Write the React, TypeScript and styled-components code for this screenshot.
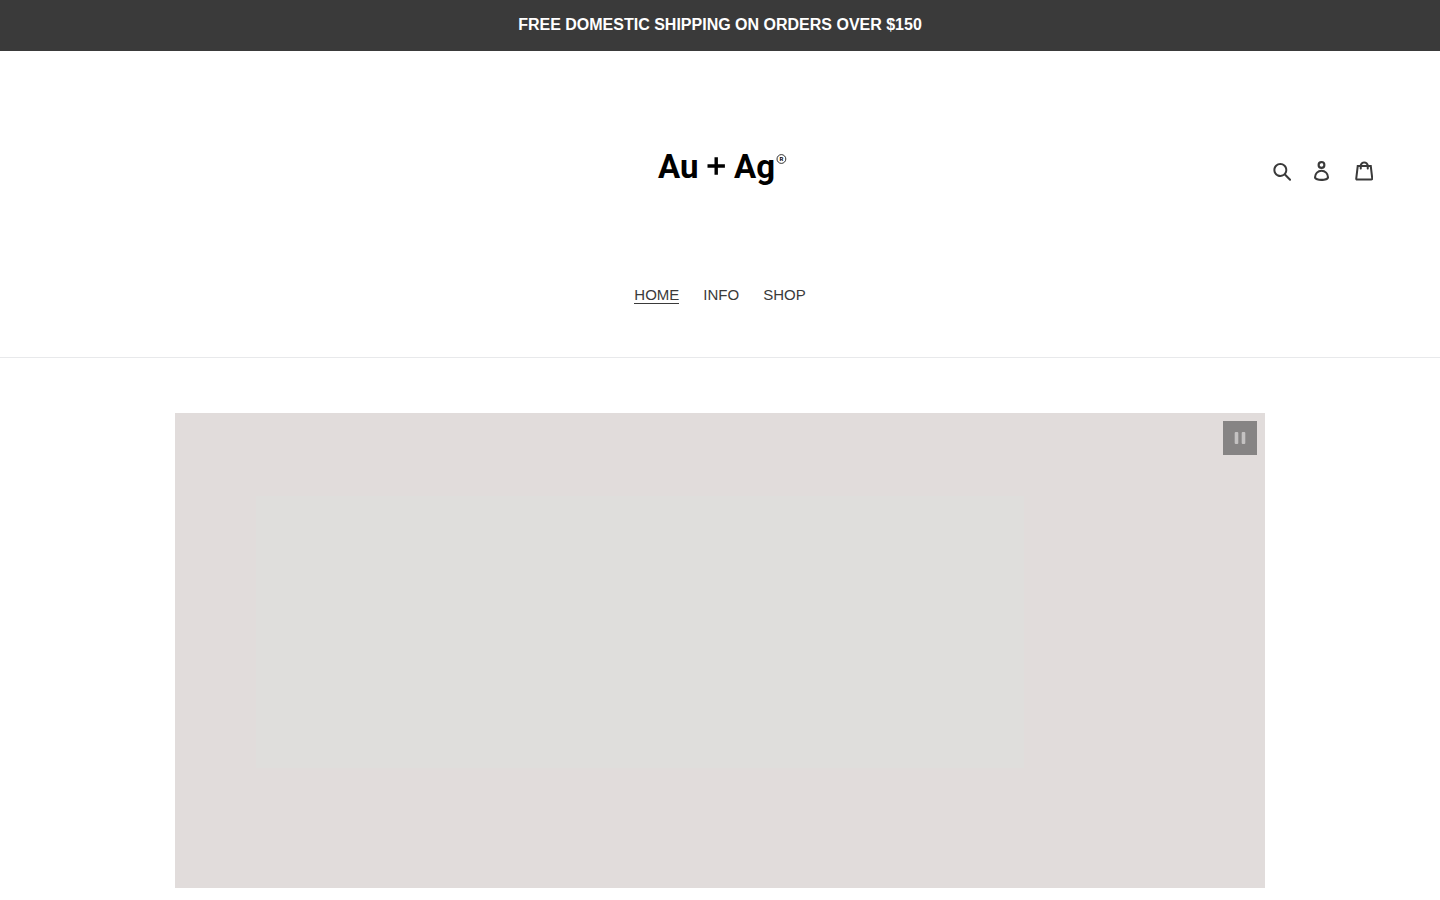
import React from "react";
import styled, { createGlobalStyle, css } from "styled-components";

const GlobalStyle = createGlobalStyle`
  *, *::before, *::after { box-sizing: border-box; }
  body {
    margin: 0;
    background: #fff;
    color: #3a3a3a;
    font-family: "Liberation Sans", Arial, sans-serif;
    font-size: 15px;
    line-height: 22px;
  }
`;

const Announcement = styled.p`
  margin: 0;
  padding: 13px 55px 14px;
  background: #3a3a3a;
  color: #fff;
  text-align: center;
  font-size: 16px;
  font-weight: 700;
  line-height: 24px;
`;

const Header = styled.header`
  border-bottom: 1px solid #e8e9eb;
  padding-bottom: 43px;
`;

const HeaderRow = styled.div`
  display: grid;
  grid-template-columns: 1fr auto 1fr;
  align-items: center;
  padding: 80px 55px 70px;
`;

const LogoLink = styled.a`
  grid-column: 2;
  display: block;
  color: #000;
`;

const LogoArt = styled.svg`
  display: block;
  width: 250px;
  height: 80px;
  fill: currentColor;
  font-family: Roboto, "Liberation Sans", sans-serif;
  font-weight: 700;
`;

const HeaderIcons = styled.div`
  display: flex;
  justify-content: flex-end;
`;

const iconBox = css`
  display: flex;
  align-items: center;
  justify-content: center;
  height: 42px;
  padding: 0;
  border: 0;
  background: none;
  color: #3a3a3a;
  cursor: pointer;
`;

const IconButton = styled.button`
  ${iconBox}
  width: 38px;
`;

const IconLink = styled.a`
  ${iconBox}
  width: 42px;
`;

const Icon = styled.svg`
  display: block;
  height: 20px;
  fill: currentColor;
`;

const NavList = styled.ul`
  display: flex;
  justify-content: center;
  gap: 24px;
  margin: 0;
  padding: 0;
  list-style: none;
`;

const NavItem = styled.li`
  display: flex;
  padding: 5px 0 10px;
`;

const NavLink = styled.a<{ $active?: boolean }>`
  color: #3a3a3a;
  line-height: 17px;
  text-decoration: none;
  border-bottom: 1px solid ${(p) => (p.$active ? "#3a3a3a" : "transparent")};
`;

const Main = styled.main`
  max-width: 1200px;
  margin: 0 auto;
  padding: 55px 55px 12px;
`;

const Slideshow = styled.section`
  position: relative;
  height: 475px;
  padding: 83px 241px 120px 81px;
  background: #e1dcdb;
`;

const SlideImage = styled.div`
  height: 100%;
  background: #dfdedc;
`;

const PauseButton = styled.button`
  position: absolute;
  top: 8px;
  right: 8px;
  display: flex;
  align-items: center;
  justify-content: center;
  width: 34px;
  height: 34px;
  padding: 0;
  border: 0;
  background: #868484;
  color: #c4c2c2;
  cursor: pointer;
`;

const links = [
  { label: "HOME", active: true },
  { label: "INFO" },
  { label: "SHOP" },
];

export default function App() {
  return (
    <>
      <GlobalStyle />
      <Announcement>FREE DOMESTIC SHIPPING ON ORDERS OVER $150</Announcement>
      <Header>
        <HeaderRow>
          <LogoLink href="#" aria-label="Au + Ag">
            <LogoArt viewBox="0 0 250 80">
              <text x="63" y="47" fontSize="33">Au</text>
              <path d="M112.500 33.300h7v-7h3.400v7h7v3.400h-7v7h-3.400v-7h-7z" />
              <text x="139" y="47" fontSize="33">Ag</text>
              <circle cx="186.400" cy="28" r="4.400" fill="none" stroke="currentColor" strokeWidth="0.800" />
              <text x="186.400" y="30" fontSize="6" textAnchor="middle">R</text>
            </LogoArt>
          </LogoLink>
          <HeaderIcons>
            <IconButton type="button" aria-label="Search">
              <Icon viewBox="0 0 37 40">
                <path d="M35.6 36l-9.8-9.8c4.100-5.400 3.600-13.200-1.300-18.100-5.400-5.400-14.200-5.400-19.700 0-5.400 5.400-5.400 14.200 0 19.700 2.600 2.600 6.100 4.100 9.800 4.100 3 0 5.900-1 8.300-2.800l9.800 9.800c.4.4.9.6 1.400.6s1-.2 1.400-.6c.9-.9.9-2.100.1-2.900zm-20.900-8.200c-2.600 0-5.100-1-7-2.900-3.900-3.900-3.900-10.100 0-14C9.600 9 12.200 8 14.700 8s5.100 1 7 2.900c3.900 3.900 3.900 10.100 0 14-1.900 1.900-4.400 2.900-7 2.900z" />
              </Icon>
            </IconButton>
            <IconLink href="#" aria-label="Log in">
              <Icon viewBox="0 0 28.33 37.68">
                <path d="M14.170 14.900a7.450 7.450 0 1 0-7.500-7.450 7.460 7.460 0 0 0 7.500 7.450zm0-10.910a3.450 3.450 0 1 1-3.500 3.460A3.460 3.460 0 0 1 14.170 4zM14.170 16.470A14.180 14.180 0 0 0 0 30.680c0 1.410.66 4 5.110 5.660a27.170 27.170 0 0 0 9.060 1.340c6.540 0 14.170-1.840 14.170-7a14.180 14.180 0 0 0-14.170-14.210zm0 17.210c-6.300 0-10.170-1.770-10.170-3a10.170 10.170 0 1 1 20.330 0c.01 1.230-3.860 3-10.160 3z" />
              </Icon>
            </IconLink>
            <IconLink href="#" aria-label="Cart">
              <Icon viewBox="0 0 37 40">
                <path d="M36.500 34.800L33.300 8h-5.900C26.700 3.900 23 .8 18.500.8S10.300 3.900 9.600 8H3.700L.5 34.800c-.2 1.500.4 2.400.9 3 .5.5 1.400 1.200 3.100 1.200h28c1.300 0 2.400-.4 3.100-1.300.7-.7 1-1.800.9-2.900zm-18-30c2.200 0 4.100 1.400 4.700 3.200h-9.500c.7-1.900 2.600-3.200 4.800-3.200zM4.500 35l2.800-23h2.200v3c0 1.100.9 2 2 2s2-.9 2-2v-3h10v3c0 1.100.9 2 2 2s2-.9 2-2v-3h2.200l2.800 23h-28z" />
              </Icon>
            </IconLink>
          </HeaderIcons>
        </HeaderRow>
        <nav aria-label="Main">
          <NavList>
            {links.map((link) => (
              <NavItem key={link.label}>
                <NavLink href="#" $active={link.active} aria-current={link.active ? "page" : undefined}>
                  {link.label}
                </NavLink>
              </NavItem>
            ))}
          </NavList>
        </nav>
      </Header>
      <Main>
        <Slideshow aria-label="Slideshow">
          <SlideImage />
          <PauseButton type="button" aria-label="Pause slideshow">
            <svg width="12" height="12" viewBox="0 0 12 12" fill="currentColor">
              <rect x="0.7" width="3.600" height="12" rx="1" />
              <rect x="7.700" width="3.600" height="12" rx="1" />
            </svg>
          </PauseButton>
        </Slideshow>
      </Main>
    </>
  );
}
